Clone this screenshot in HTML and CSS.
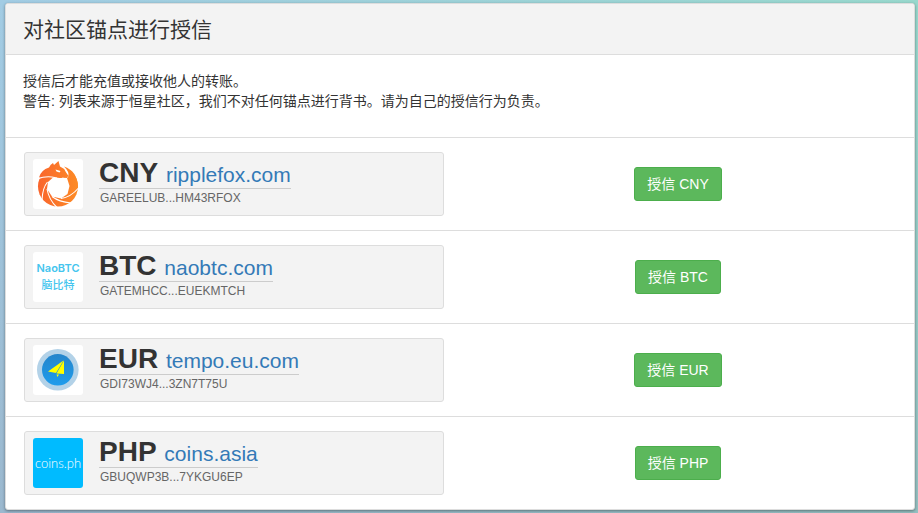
FILE: index.html
```html
<!DOCTYPE html>
<html lang="zh-CN">
<head>
<meta charset="utf-8">
<meta name="viewport" content="width=device-width, initial-scale=1">
<title>对社区锚点进行授信</title>
<link rel="stylesheet" href="styles.css">
</head>
<body>
<main class="panel">
  <header class="panel-header"><h1>对社区锚点进行授信</h1></header>
  <div class="intro">
    <p>授信后才能充值或接收他人的转账。</p>
    <p>警告: 列表来源于恒星社区，我们不对任何锚点进行背书。请为自己的授信行为负责。</p>
  </div>
  <section class="row">
    <div class="anchor">
      <svg class="logo" viewBox="0 0 50 50" aria-hidden="true">
        <defs><linearGradient id="fox" gradientUnits="userSpaceOnUse" x1="5" x2="45" y1="0" y2="0"><stop offset="0" stop-color="#f9652d"/><stop offset="1" stop-color="#fd8b25"/></linearGradient></defs>
        <rect width="50" height="50" fill="#fff"/>
        <circle cx="25" cy="27.500" r="20" fill="url(#fox)"/>
        <path fill="#fff" d="M22 4H34L37 9L35 19L27 10Z"/>
        <path fill="url(#fox)" d="M31 7.500Q44 12 45 27L44 32Q42 24 35.500 19Q37 13 31 7.500Z"/>
        <path fill="#fff" d="M20 18.500L27 17.500L34 19L36.500 27L34.500 35L28 39.500L19 37.500L14 30L15 23Z"/>
        <path fill="none" stroke="#fff" stroke-width="1.100" d="M4 20Q13 16.500 22 18.500M14.500 23Q9.500 29 9 41M14 30Q16 41 24 48.500M19 37.500Q26 43 38 44M28 39.500Q38 38 45.500 29"/>
        <path fill="url(#fox)" d="M6 18.500Q8 11 16 8.500Q17.500 5 20 4L21 6L25.500 2L27 7.500Q31 9 32.500 12.500L35.500 17Q34 19.500 30 18.500Q26 20 22 17.500Q13 15 6 18.500Z"/>
        <path fill="#fff" d="M22.500 10.500L27.500 12L26.500 13.500L23.500 12.500Z"/>
      </svg>
      <div class="details">
        <div class="name"><strong>CNY</strong> <a href="#ripplefox">ripplefox.com</a></div>
        <div class="account">GAREELUB...HM43RFOX</div>
      </div>
    </div>
    <div class="action"><button type="button">授信 CNY</button></div>
  </section>
  <section class="row">
    <div class="anchor">
      <svg class="logo" viewBox="0 0 50 50" aria-hidden="true">
        <rect width="50" height="50" fill="#fff"/>
        <g class="nao" text-anchor="middle"><text class="nao-latin" x="25" y="20">NaoBTC</text><text x="25" y="37">脑比特</text></g>
      </svg>
      <div class="details">
        <div class="name"><strong>BTC</strong> <a href="#naobtc">naobtc.com</a></div>
        <div class="account">GATEMHCC...EUEKMTCH</div>
      </div>
    </div>
    <div class="action"><button type="button">授信 BTC</button></div>
  </section>
  <section class="row">
    <div class="anchor">
      <svg class="logo" viewBox="0 0 50 50" aria-hidden="true">
        <defs><linearGradient id="sky" x1="0" x2="0" y1="0" y2="1"><stop offset="0" stop-color="#2585cb"/><stop offset="1" stop-color="#1e9cec"/></linearGradient></defs>
        <rect width="50" height="50" fill="#fff"/>
        <circle cx="24.800" cy="24.800" r="20.800" fill="#b3d2e8"/>
        <circle cx="24.800" cy="24.800" r="15.800" fill="url(#sky)"/>
        <path fill="#ff0" d="M30.500 15.500L15 26.500L23 28ZM31 15.500L23.500 28.500L31 29ZM23.500 29.500L26 29.500L24.500 32Z"/>
      </svg>
      <div class="details">
        <div class="name"><strong>EUR</strong> <a href="#tempo">tempo.eu.com</a></div>
        <div class="account">GDI73WJ4...3ZN7T75U</div>
      </div>
    </div>
    <div class="action"><button type="button">授信 EUR</button></div>
  </section>
  <section class="row">
    <div class="anchor">
      <svg class="logo" viewBox="0 0 50 50" aria-hidden="true">
        <rect width="50" height="50" fill="#00bbff"/>
        <text class="coins" x="25" y="30" text-anchor="middle">coins.ph</text>
      </svg>
      <div class="details">
        <div class="name"><strong>PHP</strong> <a href="#coins">coins.asia</a></div>
        <div class="account">GBUQWP3B...7YKGU6EP</div>
      </div>
    </div>
    <div class="action"><button type="button">授信 PHP</button></div>
  </section>
</main>
</body>
</html>
```

FILE: styles.css
```css
* { box-sizing: border-box; }

html {
  min-height: 100%;
  background: linear-gradient(to bottom, rgba(145, 155, 175, 0), rgba(145, 155, 175, 0.4)), linear-gradient(to right, #a2cce4, #98d8cd);
}

body {
  margin: 0;
  padding: 3px 3px 3px 5px;
  color: #333;
  font: 14px/20px "Liberation Sans", "Noto Sans CJK SC", sans-serif;
}

.panel {
  background: #fff;
  border: 1px solid #ddd;
  border-radius: 3px;
  box-shadow: 0 1px 3px rgba(0, 0, 0, 0.4);
  overflow: hidden;
}

.panel-header {
  padding: 13px 17px 11px;
  background: #f3f3f3;
}

h1 {
  margin: 0;
  font-size: 21px;
  font-weight: 400;
  line-height: 26px;
}

.intro {
  padding: 16px 17px 26px;
  border-top: 1px solid #ddd;
}

.intro p { margin: 0; }

.row {
  display: grid;
  grid-template-columns: 1fr 1fr;
  align-items: center;
  padding: 14px 18px;
  border-top: 1px solid #ddd;
}

.anchor {
  display: flex;
  margin-right: 16px;
  padding: 6px 8px;
  background: #f3f3f3;
  border: 1px solid #ddd;
  border-radius: 3px;
}

.logo {
  flex: none;
  width: 50px;
  height: 50px;
  border-radius: 3px;
}

.details {
  margin-left: 16px;
}

.name {
  width: fit-content;
  height: 30px;
  border-bottom: 1px solid #ccc;
  font-size: 28px;
  line-height: 28px;
  white-space: nowrap;
}

.name a {
  color: #337ab7;
  font-size: 21px;
  text-decoration: none;
}

.account {
  padding-left: 1px;
  color: #666;
  font-size: 12px;
  line-height: 18px;
}

.action { text-align: center; }

button {
  padding: 6px 12px;
  color: #fff;
  background: #5cb85c;
  border: 1px solid #4cae4c;
  border-radius: 3px;
  font: inherit;
  cursor: pointer;
}

.nao {
  fill: #45c5ee;
  font: 500 11px "Noto Sans CJK SC", sans-serif;
}

.nao-latin {
  font: 600 11px Inter, sans-serif;
}

.coins {
  fill: #fff;
  font: 300 13px Lato, sans-serif;
}
```
